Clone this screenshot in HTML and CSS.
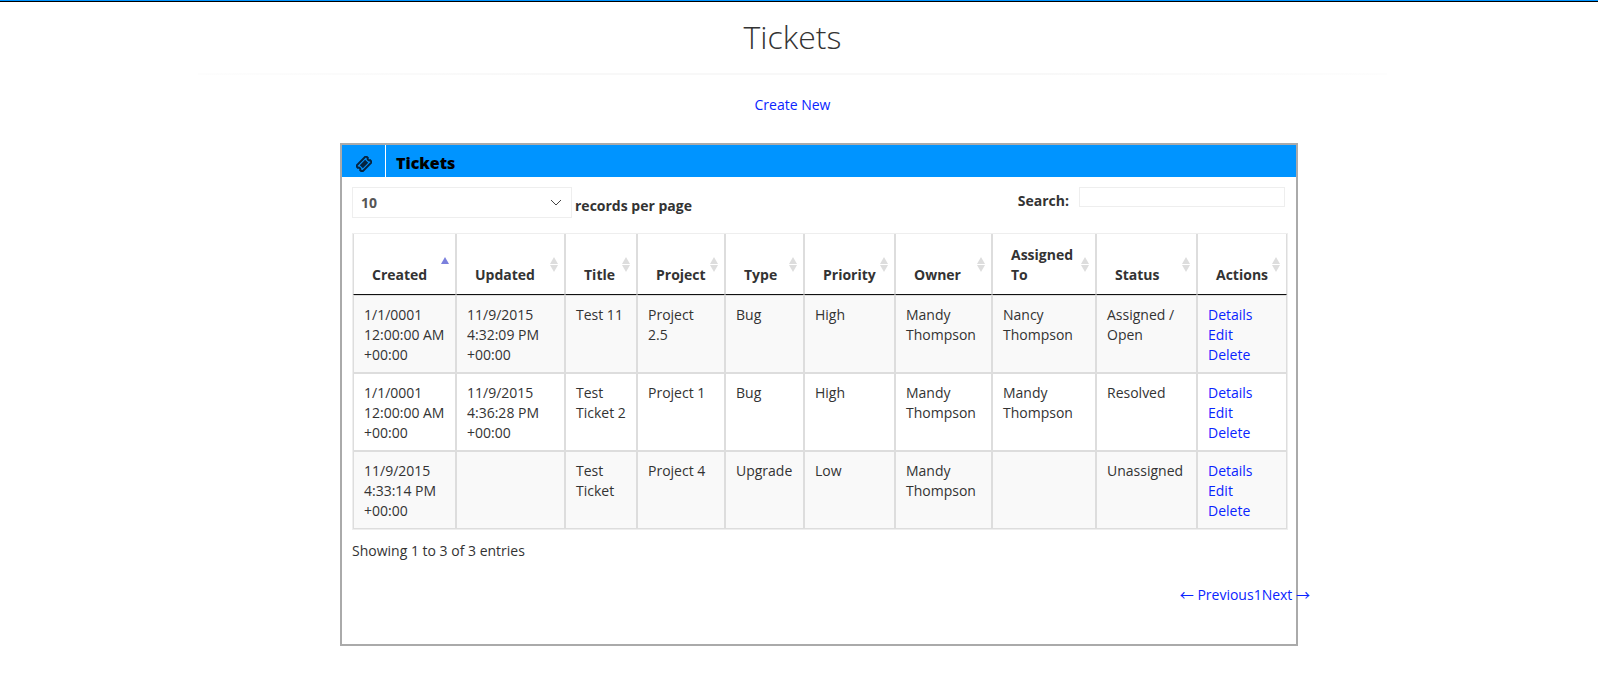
FILE: index.html
```html
<!DOCTYPE html>
<html lang="en">
<head>
<meta charset="utf-8">
<title>Tickets</title>
<link rel="stylesheet" href="styles.css">
</head>
<body>
<div class="topbar"></div>
<main class="page">
  <h1 class="page-title">Tickets</h1>
  <hr class="divider">
  <p class="create"><a href="#">Create New</a></p>

  <section class="panel">
    <header class="panel-header">
      <span class="panel-icon">
        <svg width="16" height="16" viewBox="0 0 16 16" aria-hidden="true">
          <g transform="rotate(-45 8 8)" fill="none" stroke="#06233f">
            <path stroke-width="2" d="M1 3.8H15V6.4A1.7 1.7 0 0 0 15 9.6V12.2H1V9.6A1.7 1.7 0 0 0 1 6.4Z"/>
            <rect x="4.2" y="5.8" width="7.6" height="4.4" fill="#06233f" stroke="none"/>
          </g>
        </svg>
      </span>
      <h2 class="panel-title">Tickets</h2>
    </header>
    <div class="panel-body">
      <div class="controls">
        <label class="length">
          <select class="length-select"><option>10</option><option>25</option><option>50</option></select>
          <span class="length-text">records per page</span>
        </label>
        <label class="search">
          <span>Search:</span>
          <input class="search-input" type="search">
        </label>
      </div>

      <table class="tickets">
        <colgroup>
          <col class="c-created"><col class="c-updated"><col class="c-title"><col class="c-project"><col class="c-type"><col class="c-priority"><col class="c-owner"><col class="c-assigned"><col class="c-status"><col class="c-actions">
        </colgroup>
        <thead>
          <tr>
            <th class="asc">Created</th><th>Updated</th><th>Title</th><th>Project</th><th>Type</th><th>Priority</th><th>Owner</th><th>Assigned To</th><th>Status</th><th>Actions</th>
          </tr>
        </thead>
        <tbody>
          <tr>
            <td>1/1/0001 12:00:00 AM +00:00</td><td>11/9/2015 4:32:09 PM +00:00</td><td>Test 11</td><td>Project 2.5</td><td>Bug</td><td>High</td><td>Mandy Thompson</td><td>Nancy Thompson</td><td>Assigned / Open</td>
            <td><a href="#">Details</a><br><a href="#">Edit</a><br><a href="#">Delete</a></td>
          </tr>
          <tr>
            <td>1/1/0001 12:00:00 AM +00:00</td><td>11/9/2015 4:36:28 PM +00:00</td><td>Test Ticket 2</td><td>Project 1</td><td>Bug</td><td>High</td><td>Mandy Thompson</td><td>Mandy Thompson</td><td>Resolved</td>
            <td><a href="#">Details</a><br><a href="#">Edit</a><br><a href="#">Delete</a></td>
          </tr>
          <tr>
            <td>11/9/2015 4:33:14 PM +00:00</td><td></td><td>Test Ticket</td><td>Project 4</td><td>Upgrade</td><td>Low</td><td>Mandy Thompson</td><td></td><td>Unassigned</td>
            <td><a href="#">Details</a><br><a href="#">Edit</a><br><a href="#">Delete</a></td>
          </tr>
        </tbody>
      </table>

      <p class="info">Showing 1 to 3 of 3 entries</p>
      <nav class="pager"><a href="#">← Previous</a><a href="#">1</a><a href="#">Next →</a></nav>
    </div>
  </section>
</main>
</body>
</html>
```

FILE: styles.css
```css
* { box-sizing: border-box; }

body {
  margin: 0;
  background: #fff;
  color: #333;
  font: 14px/20px "Open Sans", "Noto Sans CJK JP", sans-serif;
}

a { color: #0a24ff; text-decoration: none; }

.topbar {
  height: 2px;
  background: #0094ff;
  border-bottom: 1px solid #000;
}

.page { padding: 14px 13px 37px 0; }

.page-title {
  margin: 0;
  font-size: 32px;
  font-weight: 300;
  line-height: 42px;
  text-align: center;
}

.divider {
  width: 75%;
  height: 2px;
  margin: 15px auto 20px;
  border: 0;
  background: linear-gradient(to right, #fdfdfd, #f8f8f8 30%, #f8f8f8 70%, #fdfdfd);
}

.create { margin: 0; text-align: center; }

.panel {
  margin: 28px 287px 0 340px;
  border: 2px solid #aaa;
}

.panel-header {
  display: flex;
  height: 32px;
  background: #0094ff;
  color: #000;
}

.panel-icon {
  display: flex;
  align-items: center;
  justify-content: center;
  width: 44px;
  padding-top: 5px;
  border-right: 1px solid #fff;
}

.panel-title {
  margin: 0;
  padding: 6px 10px;
  font-size: 16px;
  font-weight: 800;
  line-height: 24px;
}

.panel-body { padding: 10px 8px 39px 10px; }

.controls {
  display: flex;
  justify-content: space-between;
  align-items: flex-start;
  padding-right: 3px;
  font-weight: 700;
}

.length { display: flex; gap: 3px; }
.length-text { padding-top: 9px; }

.length-select {
  appearance: none;
  width: 220px;
  height: 31px;
  padding: 0 8px;
  border: 1px solid #eee;
  border-radius: 0;
  color: #555;
  font: inherit;
  background: #fff url("data:image/svg+xml,%3Csvg xmlns='http://www.w3.org/2000/svg' width='12' height='8'%3E%3Cpath d='M1 1l5 5 5-5' fill='none' stroke='%23444' stroke-width='1'/%3E%3C/svg%3E") no-repeat right 9px center;
}

.search { display: flex; gap: 10px; }
.search span { padding-top: 4px; }

.search-input {
  appearance: none;
  width: 206px;
  height: 20px;
  padding: 0 4px;
  border: 1px solid #eee;
  font: inherit;
}

.tickets {
  width: 100%;
  margin-top: 15px;
  table-layout: fixed;
  border: 1px solid #eee;
  border-collapse: separate;
  border-spacing: 0;
}

.c-created { width: 103px; }
.c-updated { width: 109px; }
.c-title { width: 72px; }
.c-project { width: 88px; }
.c-type { width: 79px; }
.c-priority { width: 91px; }
.c-owner { width: 97px; }
.c-assigned { width: 104px; }
.c-status { width: 101px; }
.c-actions { width: 90px; }

.tickets th {
  position: relative;
  padding: 11px 12px 9px 18px;
  border: solid #ddd;
  border-width: 0 1px 1px;
  border-bottom-color: #111;
  text-align: left;
  vertical-align: bottom;
}

.tickets th::before,
.tickets th::after {
  content: "";
  position: absolute;
  right: 6px;
  width: 8px;
  height: 7px;
  background: #ddd;
}

.tickets th::before {
  top: calc(50% - 7px);
  clip-path: polygon(50% 0, 100% 100%, 0 100%);
}

.tickets th::after {
  top: calc(50% + 1px);
  clip-path: polygon(0 0, 100% 0, 50% 100%);
}

.tickets th.asc::before { background: #7b80dd; }
.tickets th.asc::after { display: none; }

.tickets td {
  padding: 9px 10px 7px;
  border: 1px solid #ddd;
  vertical-align: top;
}

.tickets tbody tr:nth-child(odd) { background: #f9f9f9; }

.info { margin: 11px 0 24px; }

.pager {
  display: flex;
  justify-content: flex-end;
  margin-right: -22px;
}
```
